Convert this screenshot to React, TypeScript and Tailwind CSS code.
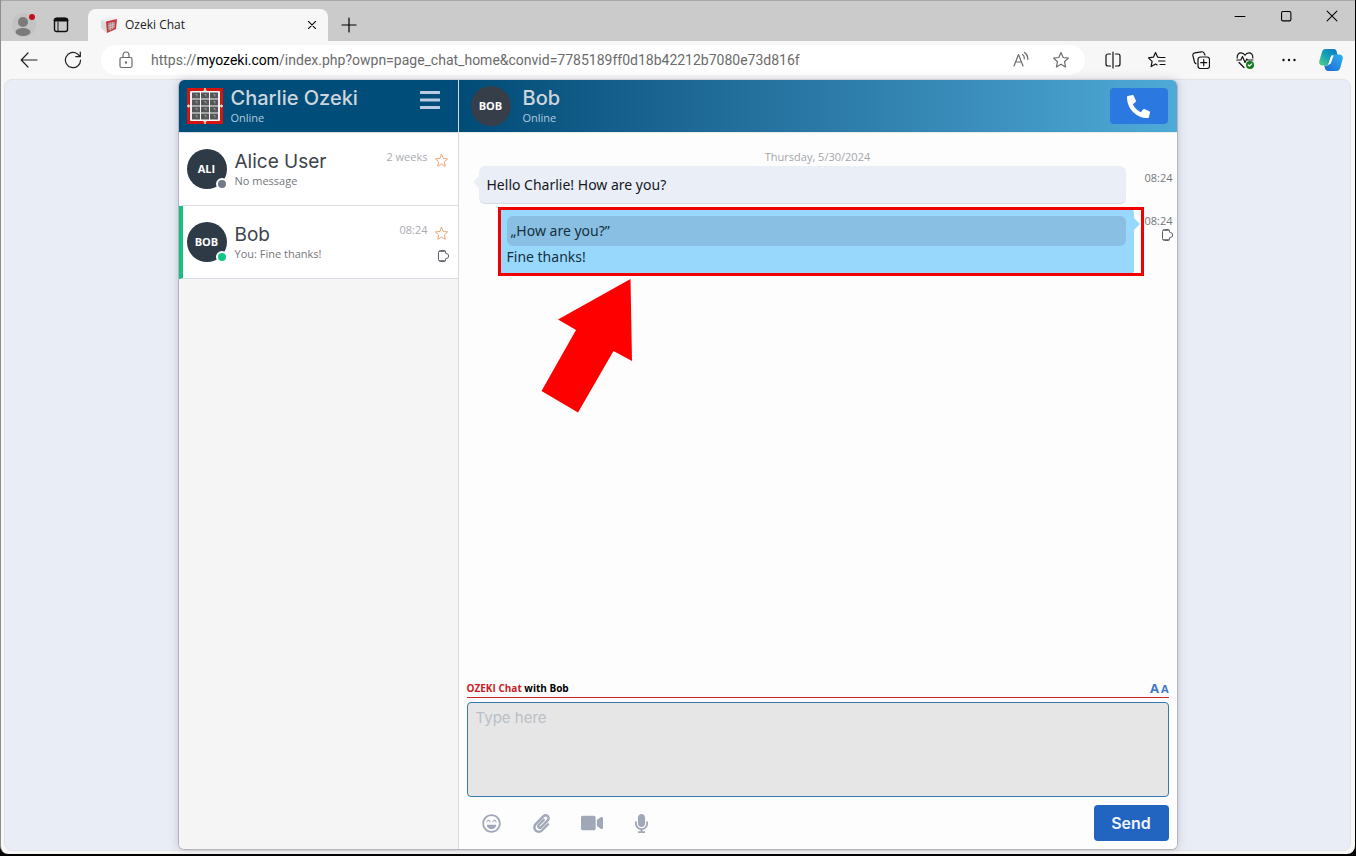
import type { ReactNode } from "react";
import { FaPaperclip, FaMicrophone, FaPhoneAlt, FaRegLaughBeam, FaVideo } from "react-icons/fa";

const contacts = [
  { name: "Alice User", initials: "ALI", message: "No message", time: "2 weeks", online: false, active: false },
  { name: "Bob", initials: "BOB", message: "You: Fine thanks!", time: "08:24", online: true, active: true },
];

const tools = [
  { label: "Emoji", icon: <FaRegLaughBeam size={19} /> },
  { label: "Attach file", icon: <FaPaperclip size={19} /> },
  { label: "Video message", icon: <FaVideo size={22} /> },
  { label: "Voice message", icon: <FaMicrophone size={19} /> },
];

function Icon({ children, size = 18 }: { children: ReactNode; size?: number }) {
  return (
    <svg
      width={size}
      height={size}
      viewBox="0 0 18 18"
      fill="none"
      stroke="currentColor"
      strokeWidth="1.2"
      strokeLinecap="round"
      strokeLinejoin="round"
      aria-hidden="true"
    >
      {children}
    </svg>
  );
}

function IconButton({ label, className, children }: { label: string; className: string; children: ReactNode }) {
  return (
    <button type="button" aria-label={label} className={`flex shrink-0 items-center justify-center ${className}`}>
      {children}
    </button>
  );
}

const STAR = "M9 1.6l2.2 4.9 5.2.6-3.9 3.6 1.1 5.3L9 13.3 4.4 16l1.1-5.3-3.9-3.6 5.2-.6z";

function DeliveredIcon() {
  return (
    <svg width="11" height="12" viewBox="0 0 11 12" fill="none" stroke="#5d6066" aria-hidden="true">
      <path d="M7.500 3V1.500a1 1 0 0 0-1-1H2.500a2 2 0 0 0-2 2v7a2 2 0 0 0 2 2h4a1 1 0 0 0 1-1V9" />
      <path d="M1 1.500h6M1 10.500h6" strokeWidth="0.8" />
      <path d="M7.500 3.500h.7a2.500 2.500 0 0 1 0 5h-.7" />
    </svg>
  );
}

function OzekiLogo() {
  return (
    <svg width="36" height="36" viewBox="0 0 36 36" aria-hidden="true">
      <rect width="36" height="36" fill="#d4140f" />
      <path d="M18 0v36M0 18h36" stroke="#f2dedb" strokeWidth="1.4" />
      <path d="M16.500 2.500h3M16.500 33.500h3M1.500 16.500v3M34.500 16.500v3" stroke="#f2dedb" />
      <rect x="3" y="3" width="30" height="30" rx="1" fill="#f4f4f4" />
      {[0, 1, 2, 3].map((row) =>
        [0, 1, 2].map((col) => (
          <g key={`${row}-${col}`}>
            <rect x={5 + col * 9} y={4.5 + row * 7} width="8" height="6" fill="#555657" />
            <path d={`M${8.5 + col * 9} ${6.5 + row * 7}h1.500v2`} stroke="#aaa" strokeWidth="0.8" fill="none" />
          </g>
        )),
      )}
    </svg>
  );
}

function TabStrip() {
  return (
    <div className="flex h-[41px] shrink-0 items-end border-t border-[#a8a8a8] bg-[#cbcbcb] pl-2.5">
      <IconButton label="Profile" className="h-8 w-7">
        <svg width="28" height="28" viewBox="0 0 28 28" aria-hidden="true">
          <circle cx="13" cy="14" r="12" fill="#c3c3c3" />
          <circle cx="12" cy="11" r="5" fill="#7b7b7b" />
          <ellipse cx="12" cy="21" rx="7.500" ry="4" fill="#7b7b7b" />
          <circle cx="21" cy="6" r="3" fill="#c50f1f" />
        </svg>
      </IconButton>
      <IconButton label="Tab actions" className="h-8 w-11">
        <svg width="16" height="16" viewBox="0 0 16 16" aria-hidden="true">
          <rect x="1.500" y="1.500" width="13" height="13" rx="2" fill="none" stroke="#111" strokeWidth="1.400" />
          <path d="M1 4V3.500A2.500 2.500 0 0 1 3.500 1h9A2.500 2.500 0 0 1 15 3.500V4zM5 4.500v10" fill="#111" stroke="#111" />
        </svg>
      </IconButton>
      <div className="ml-[5px] flex h-8 w-60 items-center rounded-t-lg bg-[#f7f7f7] pl-[13px] pr-2">
        <svg width="16" height="18" viewBox="0 0 16 18" aria-hidden="true">
          <path d="M0 4l9-3 7 2-8 3z" fill="#eee" />
          <path d="M0 4l6 2v11l-6-5z" fill="#dcdcdc" />
          <path d="M5 5.500L16 3l-1 10-9 4z" fill="#c8383c" />
          <path d="M7 7l7-1.500-.5 6.500L7.500 15z" fill="#a58c8c" />
          <path d="M9.300 6.500v7.800M11.700 6v7M7 10l7-2M7.300 12.500l6.500-2.300" stroke="#e8caca" strokeWidth=".6" />
        </svg>
        <span className="ml-2 flex-1 text-[12px] text-[#1b1b1b]">Ozeki Chat</span>
        <IconButton label="Close tab" className="size-4 text-black">
          <Icon size={16}><path d="M5 5l8 8M13 5l-8 8" /></Icon>
        </IconButton>
      </div>
      <IconButton label="New tab" className="h-8 w-[42px] text-black">
        <Icon><path d="M9 2v14M2 9h14" /></Icon>
      </IconButton>
      <div className="ml-auto flex h-full items-start text-black">
        <IconButton label="Minimize" className="h-[30px] w-[46px]">
          <Icon size={16}><path d="M3.500 9.500h11" /></Icon>
        </IconButton>
        <IconButton label="Maximize" className="h-[30px] w-[46px]">
          <Icon size={16}><rect x="4" y="4" width="10.500" height="10.500" rx="1.500" /></Icon>
        </IconButton>
        <IconButton label="Close" className="h-[30px] w-[46px]">
          <Icon size={16}><path d="M3.500 3.500l11 11M14.500 3.500l-11 11" /></Icon>
        </IconButton>
      </div>
    </div>
  );
}

function Toolbar() {
  return (
    <div className="flex h-[38px] shrink-0 items-center pl-1.5 text-[#222]">
      <IconButton label="Back" className="w-11">
        <Icon><path d="M17 9H1.500M8 2L1.200 9 8 16" /></Icon>
      </IconButton>
      <IconButton label="Refresh" className="w-11">
        <Icon>
          <path d="M16.600 9A7.600 7.600 0 1 1 13.500 2.900L16 5.500M16.300 1v4.700h-4.500" />
        </Icon>
      </IconButton>
      <div className="ml-1.5 flex h-[30px] flex-1 items-center rounded-full bg-white pl-4 pr-1 text-[#6b6b6b]">
        <Icon>
          <rect x="3" y="6.500" width="12" height="10" rx="1.500" />
          <path d="M6 6.500V4a3 3 0 0 1 6 0v2.500" />
          <circle cx="9" cy="11.500" r=".6" fill="currentColor" />
        </Icon>
        <p className="ml-4 flex-1 truncate font-[Roboto,sans-serif] text-[14px]">
          https://<span className="text-black">myozeki.com</span>
          /index.php?owpn=page_chat_home&amp;convid=7785189ff0d18b42212b7080e73d816f
        </p>
        <IconButton label="Read aloud" className="w-10">
          <Icon>
            <path d="M2 15L6.500 3.500 11 15M3.500 11h6M10.500 3.500c1.500 1 2 2.500 1.700 4.500M12.500 1.500c2.500 1.700 3.600 4 3.200 7" />
          </Icon>
        </IconButton>
        <IconButton label="Add to favorites" className="w-10">
          <Icon><path d={STAR} /></Icon>
        </IconButton>
      </div>
      <div className="ml-1.5 flex text-[#111]">
        <IconButton label="Split screen" className="w-11">
          <Icon>
            <path d="M9 1v16M6.500 3H4a2 2 0 0 0-2 2v8a2 2 0 0 0 2 2h2.500M11.500 3H14a2 2 0 0 1 2 2v8a2 2 0 0 1-2 2h-2.500" />
          </Icon>
        </IconButton>
        <IconButton label="Favorites" className="w-11">
          <Icon>
            <path d="M12 6.500l-2.300-.3L7.500 1.500 5.400 6.200l-5 .7 3.700 3.500-1 5.200 4.500-2.700 1.500 1M12 6.500h5M10.500 10h6.500M12 13.500h5" />
          </Icon>
        </IconButton>
        <IconButton label="Collections" className="w-11">
          <Icon>
            <rect x="6" y="6" width="11.500" height="11.500" rx="2.500" />
            <path d="M11.700 8.700v6M8.700 11.700h6M4 12.800A3 3 0 0 1 2.500 11L.9 4.700A2.500 2.500 0 0 1 2.700 1.800L9.500.8a2.500 2.500 0 0 1 2.700 1.500L13 4" />
          </Icon>
        </IconButton>
        <IconButton label="Browser essentials" className="w-11">
          <Icon>
            <path d="M1.200 7C.8 3.500 3 1.800 5 1.800c2 0 3.300 1.200 4 2.400.7-1.200 2-2.400 4-2.400s4.200 1.700 3.800 5.200M.8 9h4l1.700-3.500 2.500 6L10.800 8l.7 1H17M3 11.500l5 5" />
            <circle cx="14" cy="14" r="4" fill="#117a1d" stroke="none" />
            <path d="M12.300 14l1.200 1.200 2.200-2.400" stroke="#fff" />
          </Icon>
        </IconButton>
        <IconButton label="More" className="w-11">
          <Icon>
            <g fill="currentColor" stroke="none">
              <circle cx="3.500" cy="9" r="1.200" />
              <circle cx="9" cy="9" r="1.200" />
              <circle cx="14.500" cy="9" r="1.200" />
            </g>
          </Icon>
        </IconButton>
        <IconButton label="Copilot" className="w-11 pr-1">
          <svg width="24" height="24" viewBox="0 0 24 24" aria-hidden="true">
            <defs>
              <linearGradient id="copilot-a" x1="0" y1="1" x2="1" y2="0">
                <stop offset="0" stopColor="#5fd080" />
                <stop offset=".5" stopColor="#12a0b8" />
                <stop offset="1" stopColor="#1274c8" />
              </linearGradient>
              <linearGradient id="copilot-b" x1="0" y1="1" x2="1" y2="0">
                <stop offset="0" stopColor="#1b66d8" />
                <stop offset="1" stopColor="#2fb2ee" />
              </linearGradient>
            </defs>
            <path d="M6.500 1H15c1.500 0 2.200 1 2.500 2l1 4h-4c-1.500 0-2.500 1-3 2.500L10 15c-.5 1.500-1.500 2.500-3 2.500H3.500C1 17.500-.3 15.500.3 13L3 4c.6-2 1.500-3 3.500-3z" fill="url(#copilot-a)" />
            <path d="M17.500 23H9c-1.500 0-2.500-1-3-2.500l-.7-3H8c1.500 0 2.500-1 3-2.500l2-6.500C13.500 7 14.500 6.500 16 6.500h4.500c2.500 0 3.800 2 3.200 4.500L21.200 20c-.6 2-1.700 3-3.700 3z" fill="url(#copilot-b)" />
            <path d="M12.500 7.500h2.200L11.500 16H9.300z" fill="#fff" />
          </svg>
        </IconButton>
      </div>
    </div>
  );
}

function Sidebar() {
  return (
    <aside className="flex w-[280px] shrink-0 flex-col border-r border-[#d3dae0] bg-[#f5f5f5]">
      <header className="flex h-[52px] shrink-0 items-center bg-[#014d79] pl-2 pr-[18px]">
        <OzekiLogo />
        <div className="ml-2 flex-1">
          <h1 className="font-[Inter,sans-serif] text-[20px] font-medium leading-[23px] text-[#ced6dc]">Charlie Ozeki</h1>
          <p className="text-[11px] leading-4 text-[#b3cbdd]">Online</p>
        </div>
        <button type="button" aria-label="Menu" className="mb-3">
          <svg width="20" height="18" viewBox="0 0 20 18" aria-hidden="true">
            <path d="M1 1.500h18M1 9h18M1 16.500h18" stroke="#bdcbe2" strokeWidth="3" strokeLinecap="round" />
          </svg>
        </button>
      </header>
      <ul className="border-t border-[#d6dde3]">
        {contacts.map((contact) => (
          <li
            key={contact.name}
            className={`flex h-[73px] items-center border-b border-l-4 border-b-[#d9dfe4] bg-white pl-1 pr-[9px] ${
              contact.active ? "border-l-[#16bf80]" : "border-l-white"
            }`}
          >
            <div className="relative flex size-10 items-center justify-center rounded-full bg-[#2f3a47] text-[11px] font-bold text-white">
              {contact.initials}
              <span
                className={`absolute -bottom-px -right-px size-3 rounded-full border-2 border-white ${
                  contact.online ? "bg-[#10c784]" : "bg-[#727a87]"
                }`}
              />
            </div>
            <div className="ml-2 flex-1">
              <h2 className="font-[Inter,sans-serif] text-[19px] leading-[23px] text-[#3d434b]">{contact.name}</h2>
              <p className="text-[11px] leading-4 text-[#74777c]">{contact.message}</p>
            </div>
            <div className="flex h-10 flex-col items-end justify-between">
              <div className="flex items-start gap-1.5">
                <span className="text-[11px] leading-4 text-[#a9acb0]">{contact.time}</span>
                <button type="button" aria-label={`Favorite ${contact.name}`} className="mt-1 text-[#eda678]">
                  <Icon size={15}><path d={STAR} /></Icon>
                </button>
              </div>
              {contact.active && <DeliveredIcon />}
            </div>
          </li>
        ))}
      </ul>
    </aside>
  );
}

function Messages() {
  return (
    <div className="flex-1 border-t border-[#e6ebef] pl-5 pr-1 pt-4">
      <p className="-ml-4 text-center text-[11px] leading-4 text-[#a3a6aa]">Thursday, 5/30/2024</p>
      <div className="mt-px flex">
        <div className="relative flex-1 rounded-md border-b border-[#d5dbe4] bg-[#e9eef7] px-2 py-2 font-['Noto_Sans',sans-serif] text-[14px] leading-[21px] text-[#16181c]">
          Hello Charlie! How are you?
          <svg width="6" height="12" viewBox="0 0 6 12" className="absolute -left-1.5 top-2.5" aria-hidden="true">
            <path d="M6 0v12L0 6z" fill="#e9eef7" />
          </svg>
        </div>
        <time className="w-[47px] pt-1 text-right text-[11px] leading-4 text-[#74777c]">08:24</time>
      </div>
      <div className="ml-5 mt-[5px] flex">
        <div className="relative flex-1 rounded-sm bg-[#99d8fd] px-2 pb-1.5 pt-[7px] font-['Noto_Sans',sans-serif] text-[14px] text-[#16303f]">
          <blockquote className="rounded-md bg-[#89bfe2] px-1 leading-[30px]">„How are you?”</blockquote>
          <p className="leading-[22px]">Fine thanks!</p>
          <svg width="7" height="14" viewBox="0 0 7 14" className="absolute -right-1.5 top-2" aria-hidden="true">
            <path d="M0 0v14L7 7z" fill="#99d8fd" />
          </svg>
          {/* highlight around the quoted reply */}
          <span className="absolute -bottom-0.5 -left-px -right-2.5 -top-0.5 border-[3px] border-[#f20000]" />
          <svg width="92" height="134" viewBox="0 0 92 134" className="absolute left-[42px] top-[70px]" aria-hidden="true">
            <path d="M89.500 0L17 40.500l18 10.500L.5 112 37 133.500 72.500 72 91 82z" fill="#ff0000" />
          </svg>
        </div>
        <div className="flex w-[39px] flex-col items-end pt-1">
          <time className="text-[11px] leading-4 text-[#74777c]">08:24</time>
          <DeliveredIcon />
        </div>
      </div>
    </div>
  );
}

function Composer() {
  return (
    <form className="p-2" onSubmit={(e) => e.preventDefault()}>
      <div className="mb-1 flex h-[18px] items-center justify-between border-b border-b-[#c9252b]">
        <label htmlFor="message" className="text-[10px] font-bold text-black">
          <span className="text-[#c81e26]">OZEKI Chat</span> with Bob
        </label>
        <div className="flex items-baseline gap-0.5 font-bold text-[#3c78c8]">
          <button type="button" aria-label="Larger text" className="text-[13px]">A</button>
          <button type="button" aria-label="Smaller text" className="text-[11px]">A</button>
        </div>
      </div>
      <textarea
        id="message"
        placeholder="Type here"
        className="block h-[95px] w-full resize-none rounded border border-[#3579a8] bg-[#e6e6e6] px-2 py-1 font-[Inter,sans-serif] text-[15px] leading-[22px] outline-none placeholder:text-[#b9bfc6]"
      />
      <div className="mt-2 flex h-9 items-center">
        {tools.map((tool) => (
          <IconButton key={tool.label} label={tool.label} className="h-9 w-[50px] text-[#a0a8b8]">
            {tool.icon}
          </IconButton>
        ))}
        <button
          type="submit"
          className="ml-auto h-9 w-[75px] rounded bg-[#2165c0] font-[Inter,sans-serif] text-[16px] font-semibold text-[#f1f6fc]"
        >
          Send
        </button>
      </div>
    </form>
  );
}

export default function App() {
  return (
    <div className="flex h-screen flex-col bg-black pb-0.5 pr-px font-['Open_Sans',sans-serif]">
      <div className="flex min-h-0 flex-1 flex-col rounded-b-lg border-l border-[#8d8d8d] bg-[#f7f7f7]">
        <TabStrip />
        <Toolbar />
        <div className="mb-[3px] ml-[3px] mr-1 flex min-h-0 flex-1 justify-center rounded-lg border border-[#e3e3e6] bg-[#e9eef6]">
          <div className="flex w-full max-w-[1000px] overflow-hidden rounded-md border-x border-b border-[#b3b3b8] shadow-[0_0_10px_rgba(80,70,110,0.25)]">
            <Sidebar />
            <main className="flex min-w-0 flex-1 flex-col bg-[#fdfdfd]">
              <header className="flex h-[52px] shrink-0 items-center bg-linear-to-r from-[#014b77] to-[#4faad7] pl-3 pr-[9px]">
                <div className="flex size-10 items-center justify-center rounded-full bg-[#363e4a] text-[11px] font-bold text-white">
                  BOB
                </div>
                <div className="ml-3 flex-1">
                  <h2 className="font-[Inter,sans-serif] text-[20px] font-medium leading-[23px] text-[#ced6dc]">Bob</h2>
                  <p className="text-[11px] leading-4 text-[#b3cbdd]">Online</p>
                </div>
                <IconButton label="Call" className="h-9 w-[58px] rounded bg-[#2b78e0] text-white">
                  <FaPhoneAlt size={23} />
                </IconButton>
              </header>
              <Messages />
              <Composer />
            </main>
          </div>
        </div>
      </div>
    </div>
  );
}
